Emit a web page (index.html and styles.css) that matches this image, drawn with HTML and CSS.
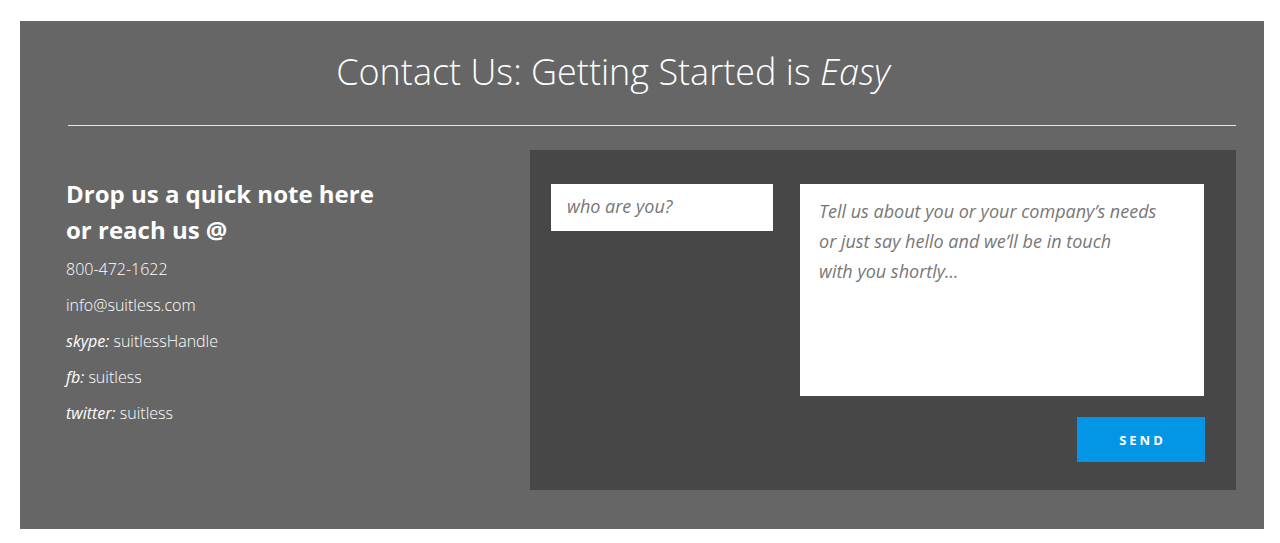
FILE: index.html
```html
<!DOCTYPE html>
<html>
<head>
<meta charset="utf-8">
<link rel="stylesheet" href="styles.css">
</head>
<body>
<section class="panel">
  <h1 class="title">Contact Us: Getting Started is <em>Easy</em></h1>
  <hr class="divider">
  <div class="content">
    <div class="info">
      <h2 class="lead">Drop us a quick note here<br>or reach us @</h2>
      <p class="line">800-472-1622</p>
      <p class="line">info@suitless.com</p>
      <p class="line"><em>skype:</em> suitlessHandle</p>
      <p class="line"><em>fb:</em> suitless</p>
      <p class="line"><em>twitter:</em> suitless</p>
    </div>
    <form class="form">
      <div class="fields">
        <input class="name" type="text" placeholder="who are you?">
        <textarea class="message" placeholder="Tell us about you or your company’s needs
or just say hello and we’ll be in touch
with you shortly..."></textarea>
      </div>
      <div class="actions">
        <button class="send" type="button">SEND</button>
      </div>
    </form>
  </div>
</section>
</body>
</html>
```
FILE: styles.css
```css
* { box-sizing: border-box; }
html, body { margin: 0; padding: 0; background: #ffffff; }
body { padding: 21px 16px 14px 20px; font-family: "Open Sans", "Liberation Sans", sans-serif; }
.panel {
  background: #666666;
  color: #ffffff;
  height: 508px;
  padding: 0 28px 0 46px;
}
.title {
  margin: 0;
  padding: 28px 80px 0 4px;
  height: 104px;
  font-size: 36px;
  font-weight: 300;
  line-height: 46px;
  text-align: center;
}
.title em { font-style: italic; font-weight: 300; }
.divider {
  margin: 0 0 24px 2px;
  border: 0;
  border-top: 1px solid #e6e6e6;
  height: 0;
}
.content { display: flex; justify-content: space-between; }
.info { padding-top: 26px; }
.lead {
  margin: 0 0 3px 0;
  font-size: 24px;
  font-weight: 700;
  line-height: 36px;
}
.line {
  margin: 0;
  font-size: 16px;
  font-weight: 300;
  line-height: 36px;
}
.line em { font-style: italic; font-weight: 400; }
.form {
  width: 706px;
  height: 340px;
  background: #474747;
  padding: 34px 31px 28px 21px;
  display: flex;
  flex-direction: column;
  justify-content: space-between;
}
.fields { display: flex; gap: 27px; align-items: flex-start; }
.name, .message {
  border: 0;
  outline: none;
  background: #ffffff;
  color: #777777;
  font-family: "Open Sans", "Liberation Sans", sans-serif;
  font-style: italic;
  font-size: 18px;
  margin: 0;
}
.name {
  width: 222px;
  height: 47px;
  padding: 0 16px 4px 16px;
}
.message {
  width: 404px;
  height: 212px;
  padding: 12px 19px;
  line-height: 30px;
  resize: none;
}
::placeholder { color: #777777; opacity: 1; }
.actions { display: flex; justify-content: flex-end; }
.send {
  width: 128px;
  height: 45px;
  border: 0;
  background: #0396e6;
  color: #ffffff;
  font-family: "Open Sans", "Liberation Sans", sans-serif;
  font-weight: 700;
  font-size: 13px;
  letter-spacing: 3px;
  padding: 0 0 0 3px;
}
```
